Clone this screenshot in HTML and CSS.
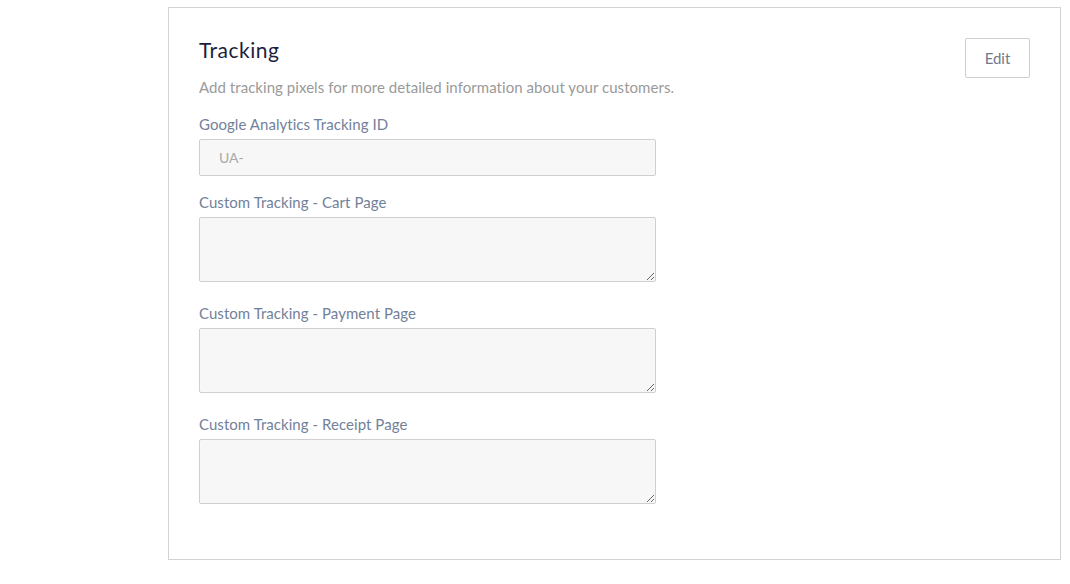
FILE: index.html
```html
<!DOCTYPE html>
<html lang="en">
<head>
    <meta charset="UTF-8">
    <meta name="viewport" content="width=device-width, initial-scale=1.0">
    <title>Tracking</title>
    <link rel="stylesheet" href="styles.css">
</head>
<body>
    <div class="page">
        <section class="card">
            <div class="card-head">
                <div>
                    <h2 class="card-title">Tracking</h2>
                    <p class="card-desc">Add tracking pixels for more detailed information about your customers.</p>
                </div>
                <button class="btn-edit">Edit</button>
            </div>

            <div class="field">
                <label for="ga">Google Analytics Tracking ID</label>
                <input type="text" id="ga" placeholder="UA-" disabled>
            </div>

            <div class="field">
                <label for="cart">Custom Tracking - Cart Page</label>
                <textarea id="cart"></textarea>
            </div>

            <div class="field">
                <label for="payment">Custom Tracking - Payment Page</label>
                <textarea id="payment"></textarea>
            </div>

            <div class="field">
                <label for="receipt">Custom Tracking - Receipt Page</label>
                <textarea id="receipt"></textarea>
            </div>
        </section>
    </div>
</body>
</html>
```

FILE: styles.css
```css
body {
    margin: 0;
    background: #fff;
    font-family: Lato, "Open Sans", sans-serif;
}

.page {
    padding: 7px 9px 0 168px;
}

.card {
    border: 1px solid #d3d3d3;
    padding: 28px 30px 55px 30px;
    height: 553px;
    box-sizing: border-box;
}

.card-head {
    display: flex;
    justify-content: space-between;
    align-items: flex-start;
}

.card-title {
    margin: 0;
    font-size: 21px;
    font-weight: 400;
    line-height: 28px;
    letter-spacing: 0.5px;
    color: #1b1f3b;
}

.card-desc {
    margin: 13px 0 0;
    font-size: 15px;
    line-height: 20px;
    letter-spacing: 0.05px;
    color: #9a9a9a;
}

.btn-edit {
    margin-top: 2px;
    width: 65px;
    height: 40px;
    border: 1px solid #cfcfcf;
    border-radius: 2px;
    background: #fff;
    font-family: inherit;
    font-size: 15px;
    color: #707a8c;
    cursor: pointer;
}

.field {
    display: flex;
    flex-direction: column;
    align-items: flex-start;
    margin-top: 17px;
}

.field label {
    font-size: 15px;
    line-height: 20px;
    letter-spacing: 0.05px;
    color: #72819a;
    margin-bottom: 5px;
}

.field input,
.field textarea {
    width: 457px;
    box-sizing: border-box;
    border: 1px solid #cfcfcf;
    border-radius: 2px;
    background: #f7f7f7;
    font-family: inherit;
    font-size: 14px;
    margin: 0;
}

.field input {
    height: 37px;
    padding: 0 19px;
    color: #aaa;
}

.field input::placeholder {
    color: #a9a9a9;
}

.field textarea {
    height: 65px;
    resize: vertical;
    display: block;
}

.field + .field {
    margin-top: 16px;
}

.field:has(textarea) + .field {
    margin-top: 21px;
}
```
